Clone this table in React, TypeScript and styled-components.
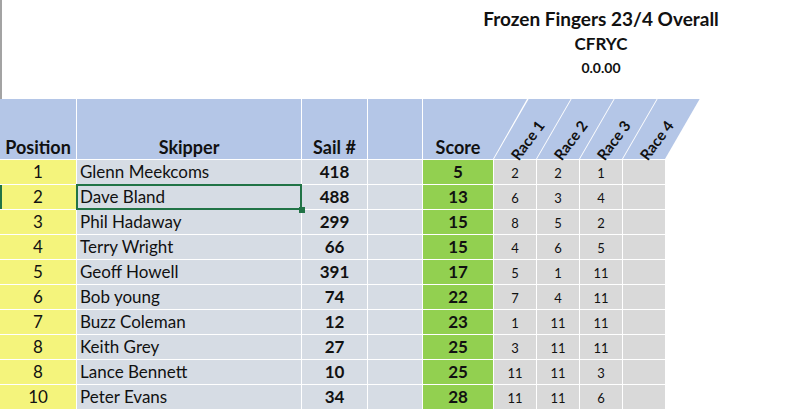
import React from "react";
import styled, { createGlobalStyle } from "styled-components";

const GlobalStyle = createGlobalStyle`
  html, body {
    margin: 0;
    padding: 0;
    background: #ffffff;
  }
  body {
    font-family: Lato, "Liberation Sans", sans-serif;
    color: #111111;
  }
`;

type Result = {
    pos: number;
    skipper: string;
    sail: number;
    score: number;
    races: number[];
};

const results: Result[] = [
    { pos: 1, skipper: "Glenn Meekcoms", sail: 418, score: 5, races: [2, 2, 1] },
    { pos: 2, skipper: "Dave Bland", sail: 488, score: 13, races: [6, 3, 4] },
    { pos: 3, skipper: "Phil Hadaway", sail: 299, score: 15, races: [8, 5, 2] },
    { pos: 4, skipper: "Terry Wright", sail: 66, score: 15, races: [4, 6, 5] },
    { pos: 5, skipper: "Geoff Howell", sail: 391, score: 17, races: [5, 1, 11] },
    { pos: 6, skipper: "Bob young", sail: 74, score: 22, races: [7, 4, 11] },
    { pos: 7, skipper: "Buzz Coleman", sail: 12, score: 23, races: [1, 11, 11] },
    { pos: 8, skipper: "Keith Grey", sail: 27, score: 25, races: [3, 11, 11] },
    { pos: 8, skipper: "Lance Bennett", sail: 10, score: 25, races: [11, 11, 3] },
    { pos: 10, skipper: "Peter Evans", sail: 34, score: 28, races: [11, 11, 6] },
];

const raceNames = ["Race 1", "Race 2", "Race 3", "Race 4"];

export default function App() {
    return (
        <>
            <GlobalStyle />
            <Page>
                <Banner>
                    <Title>Frozen Fingers 23/4 Overall</Title>
                    <Club>CFRYC</Club>
                    <Stamp>0.0.00</Stamp>
                </Banner>
                <Sheet>
                    <HeadCell>Position</HeadCell>
                    <HeadCell>Skipper</HeadCell>
                    <HeadCell>Sail #</HeadCell>
                    <HeadCell />
                    <ScoreHead>Score</ScoreHead>
                    <RaceGroup>
                        {raceNames.map((name) => (
                            <RaceHead key={name}>
                                <RaceLabel>{name}</RaceLabel>
                            </RaceHead>
                        ))}
                    </RaceGroup>

                    {results.map((r, i) => (
                        <React.Fragment key={r.skipper}>
                            <PosCell $marked={i === 1}>{r.pos}</PosCell>
                            <NameCell $selected={i === 1}>{r.skipper}</NameCell>
                            <SailCell>{r.sail}</SailCell>
                            <BlankCell />
                            <ScoreCell>{r.score}</ScoreCell>
                            {[0, 1, 2, 3].map((k) => (
                                <RaceCell key={k}>{r.races[k] ?? ""}</RaceCell>
                            ))}
                        </React.Fragment>
                    ))}
                </Sheet>
            </Page>
        </>
    );
}

const Page = styled.div`
    width: 795px;
    height: 410px;
    overflow: hidden;
`;

const Banner = styled.header`
    height: 99px;
    box-sizing: border-box;
    border-left: 2px solid #a3a3a3;
    padding-left: 405px;
    display: flex;
    flex-direction: column;
    align-items: center;
    font-weight: 700;
`;

const Title = styled.div`
    margin-top: 6px;
    font-size: 19px;
    line-height: 25px;
`;

const Club = styled.div`
    margin-top: 1px;
    font-size: 17px;
    line-height: 24px;
`;

const Stamp = styled.div`
    margin-top: 2px;
    font-size: 14px;
    line-height: 19px;
`;

const Sheet = styled.div`
    display: grid;
    grid-template-columns: 76px 224px 65px 54px 70px repeat(4, 42px);
    grid-template-rows: 60px repeat(10, 24px);
    gap: 1px;
    width: 665px;
    background: #ffffff;
`;

const HeadCell = styled.div`
    display: flex;
    align-items: flex-end;
    justify-content: center;
    padding-bottom: 2px;
    background: #b4c6e7;
    font-size: 18px;
    font-weight: 700;
    line-height: 20px;
`;

const ScoreHead = styled(HeadCell)`
    position: relative;

    &::after {
        content: "";
        position: absolute;
        top: 0;
        left: 100%;
        width: 35px;
        height: 100%;
        background: #b4c6e7;
        clip-path: polygon(0 0, 34px 0, 0 100%);
    }
`;

const RaceGroup = styled.div`
    grid-column: 6 / span 4;
    display: flex;
    gap: 1px;
`;

const RaceHead = styled.div`
    flex: 0 0 42px;
    min-width: 0;
    display: flex;
    align-items: flex-end;
    justify-content: center;
    padding: 0 0 10px 3px;
    box-sizing: border-box;
    background: #b4c6e7;
    transform: skewX(-30deg);
    transform-origin: bottom left;
`;

const RaceLabel = styled.span`
    display: block;
    flex: none;
    white-space: nowrap;
    font-size: 15px;
    font-weight: 700;
    line-height: 18px;
    transform: skewX(30deg) rotate(-53deg);
`;

const Cell = styled.div`
    display: flex;
    align-items: center;
    justify-content: center;
    font-size: 17px;
    line-height: 20px;
    white-space: nowrap;
`;

const PosCell = styled(Cell)<{ $marked?: boolean }>`
    background: #f4f47c;
    box-shadow: ${(p) => (p.$marked ? "inset 2px 0 0 #217346" : "none")};
`;

const NameCell = styled(Cell)<{ $selected?: boolean }>`
    position: relative;
    justify-content: flex-start;
    padding-left: 3px;
    background: #d6dce4;

    ${(p) =>
        p.$selected &&
        `
        &::after {
            content: "";
            position: absolute;
            inset: -1px;
            border: 2px solid #217346;
        }
        &::before {
            content: "";
            position: absolute;
            right: -4px;
            bottom: -4px;
            width: 6px;
            height: 6px;
            background: #217346;
            z-index: 2;
        }
    `}
`;

const SailCell = styled(Cell)`
    background: #d6dce4;
    font-weight: 700;
`;

const BlankCell = styled(Cell)`
    background: #d6dce4;
`;

const ScoreCell = styled(Cell)`
    background: #92d050;
    font-weight: 700;
`;

const RaceCell = styled(Cell)`
    background: #d9d9d9;
    font-size: 13px;
    padding-top: 2px;
    box-sizing: border-box;
`;
